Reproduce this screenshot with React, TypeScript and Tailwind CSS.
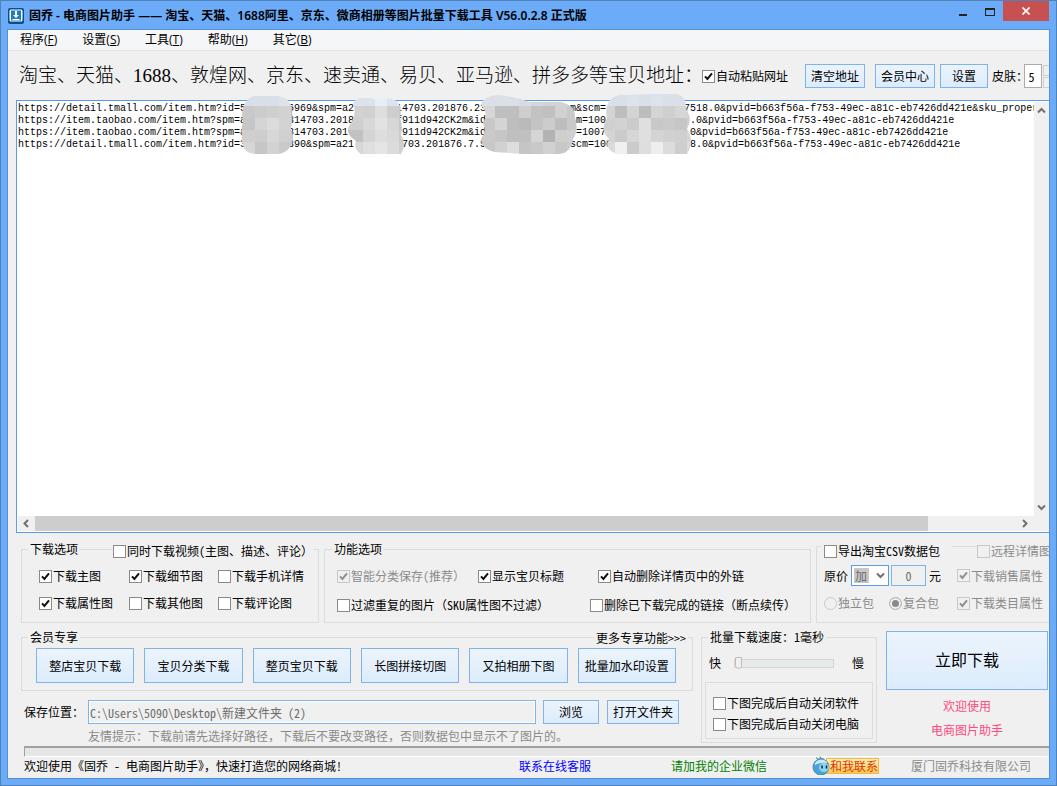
import React, { useState } from 'react';

interface CheckProps {
  label: string;
  checked?: boolean;
  disabled?: boolean;
  className?: string;
}

const Check: React.FC<CheckProps> = ({ label, checked = false, disabled = false, className = '' }) => {
  const [on, setOn] = useState(checked);
  return (
    <label
      className={`relative flex h-4 items-center gap-px whitespace-nowrap ${
        disabled ? 'text-[#8b8b8b]' : 'text-black'
      } ${className}`}
    >
      <input
        type="checkbox"
        checked={on}
        disabled={disabled}
        onChange={() => setOn(!on)}
        className="size-[13px] shrink-0 appearance-none border border-[#8a8a8a] bg-white disabled:border-[#c8c8c8] disabled:bg-[#f0f0f0]"
      />
      {on && (
        <svg className="pointer-events-none absolute left-0 size-[13px]" viewBox="0 0 13 13" fill="none">
          <path d="M3 6.4L5.4 9L10 3.4" stroke={disabled ? '#8f8f8f' : '#111'} strokeWidth="2" />
        </svg>
      )}
      {label}
    </label>
  );
};

interface BtnProps {
  children: React.ReactNode;
  className?: string;
}

const Btn: React.FC<BtnProps> = ({ children, className = '' }) => (
  <button
    type="button"
    className={`border border-[#7eb4ea] bg-linear-to-b from-[#ecf4fc] to-[#dcecfc] whitespace-nowrap ${className}`}
  >
    {children}
  </button>
);

const Radio: React.FC<{ label: string; checked?: boolean; className?: string }> = ({ label, checked, className = '' }) => (
  <label className={`relative flex h-4 items-center gap-px whitespace-nowrap text-[#8b8b8b] ${className}`}>
    <input
      type="radio"
      name="pack"
      disabled
      defaultChecked={checked}
      className="size-[13px] shrink-0 appearance-none rounded-full border border-[#c8c8c8] bg-[#f0f0f0] checked:border-[#bcbcbc] checked:bg-[#8a8a8a] checked:shadow-[inset_0_0_0_2px_#f0f0f0]"
    />
    {label}
  </label>
);

const menus = [
  { text: '程序', key: 'F' },
  { text: '设置', key: 'S' },
  { text: '工具', key: 'T' },
  { text: '帮助', key: 'H' },
  { text: '其它', key: 'B' },
];

const tail = 'pvid=b663f56a-f753-49ec-a81c-eb7426dd421e';
const gap = (n: number) => ' '.repeat(n);

const urls = [
  `https://detail.tmall.com/item.htm?id=5${gap(7)}6969&spm=a2${gap(7)}14703.201876.23${gap(14)}m&scm=${gap(13)}7518.0&${tail}&sku_proper`,
  `https://item.taobao.com/item.htm?spm=a${gap(7)}814703.2018${gap(7)}f911d942CK2m&id${gap(15)}m=100${gap(14)}.0&${tail}`,
  `https://item.taobao.com/item.htm?spm=a${gap(7)}814703.201${gap(8)}f911d942CK2m&id${gap(15)}=1007.${gap(13)}0&${tail}`,
  `https://detail.tmall.com/item.htm?id=3${gap(7)}890&spm=a21${gap(8)}703.201876.7.5${gap(14)}scm=100${gap(13)}8.0&${tail}`,
].join('\n');

// pixelated patches over the private parts of the links
const patches = [
  {
    id: 'm1',
    x: 224,
    clip: 'M238 3H262Q275 4 277 16Q278 26 276 36Q280 44 276 53Q270 61 262 61H240Q228 60 227 48Q226 36 228 28Q224 10 238 3Z',
    rows: ['#d9dfe8 #d9dfe8 #d9dfe8 #dfe3e9 #d9dfe8', '#c9c9c9 #cccccc #cfcfcf #d2d2d2 #bebebe', '#c6c6c6 #d5d5d5 #dcdcdc #d3d3d3 #cacaca', '#cfcfcf #cdcdcd #d7d7d7 #d0d0d0 #c9c9c9', '#d6d6d6 #c6c6c6 #d2d2d2 #c9c9c9 #d0d0d0'],
  },
  {
    id: 'm2',
    x: 332,
    clip: 'M346 5Q356 4 362 7Q372 4 380 7Q388 12 385 24Q388 34 386 42Q392 52 386 61H346Q338 56 341 48Q328 40 336 30Q342 20 338 11Q340 5 346 5Z',
    rows: ['#dde3ec #dde3ec #e6edf6 #dde3ec #dde3ec', '#d2d2d2 #d0d0d0 #dedede #cecece #c9c9c9', '#cfcfcf #d8d8d8 #e2e2e2 #d6d6d6 #c6c6c6', '#c2c2c2 #d4d4d4 #dddddd #d9d9d9 #cbcbcb', '#d7d7d7 #dfdfdf #e5e5e5 #dcdcdc #cfcfcf'],
  },
  {
    id: 'm3',
    x: 464,
    clip: 'M482 2Q500 3 514 9H546Q560 12 560 24Q564 38 558 46Q556 60 544 61H508L480 59Q466 56 466 46Q472 38 468 30Q474 20 466 12Q468 3 482 2Z',
    rows: ['#dbe0e7 #dbe0e7 #dbe0e7 #d8dce2 #d4d6d9 #d3d3d3 #d3d3d3 #d3d3d3', '#d6d6d6 #bfbfbf #bfbfbf #cecece #c2c2c2 #c0c0c0 #d1d1d1 #c9c9c9', '#c8c8c8 #d4d4d4 #bdbdbd #bababa #c4c4c4 #cccccc #bebebe #c9c9c9', '#cacaca #c6c6c6 #bfbfbf #c0c0c0 #d5d5d5 #b3b3b3 #cfcfcf #d0d0d0', '#c8c8c8 #d1d1d1 #dddddd #c5c5c5 #c9c9c9 #d1d1d1 #c8c8c8 #cccccc'],
  },
  {
    id: 'm4',
    x: 584,
    clip: 'M604 2L640 1H662Q672 4 671 16Q678 26 672 36Q680 48 672 61H602Q588 56 594 46Q584 36 592 26Q588 6 604 2Z',
    rows: ['#dae0e8 #dae0e8 #dde3ea #dae0e8 #dde3ea #dae0e8 #dae0e8 #dae0e8', '#d4d4d4 #bebebe #d4d4d4 #bcbcbc #d4d4d4 #cfcfcf #d6d6d6 #d2d2d2', '#d0d0d0 #d2d2d2 #cbcbcb #dfdfdf #c8c8c8 #cacaca #c6c6c6 #cfcfcf', '#d4d4d4 #cbcbcb #d7d7d7 #dfdfdf #d4d4d4 #d1d1d1 #cfcfcf #d6d6d6', '#dadada #f0f0f0 #cbcbcb #dedede #eeeeee #dcdcdc #cecece #dcdcdc'],
  },
];

const Mosaic: React.FC = () => (
  <svg className="pointer-events-none absolute -top-2 -left-[2px] h-[62px] w-[700px]" viewBox="0 0 700 62">
    {patches.map((p) => (
      <g key={p.id} clipPath={`url(#${p.id})`}>
        <clipPath id={p.id}>
          <path d={p.clip} />
        </clipPath>
        {p.rows.map((row, r) =>
          row.split(' ').map((c, i, all) => {
            const left = i === 0 ? 12 : 0;
            const right = i === all.length - 1 ? 12 : 0;
            const up = r === 0 ? 2 : 0;
            return (
              <rect
                key={`${r}-${i}`}
                x={p.x + 4 + i * 12 - left}
                y={r * 12 + 1 - up}
                width={12 + left + right}
                height={12 + up}
                fill={c}
                shapeRendering="crispEdges"
              />
            );
          })
        )}
      </g>
    ))}
  </svg>
);

const Arrow: React.FC<{ d: string; className?: string }> = ({ d, className = '' }) => (
  <svg className={`size-[9px] shrink-0 ${className}`} viewBox="0 0 9 9" fill="none">
    <path d={d} stroke="#707070" strokeWidth="2" />
  </svg>
);

const TitleBar: React.FC = () => (
  <header className="flex h-[29px] items-start justify-between">
    <div className="flex h-[29px] items-center gap-[5px] font-['Noto_Sans','Noto_Sans_CJK_SC',sans-serif] font-semibold whitespace-nowrap">
      <svg className="size-4" viewBox="0 0 16 16">
        <rect width="16" height="16" rx="2" fill="#0b4f8c" />
        <rect x="1.5" y="1.5" width="13" height="12" rx="1.5" fill="#fff" />
        <rect x="3" y="2.5" width="10" height="10" fill="#1b7cc4" />
        <path d="M7 3h2v4h2L8 10 5 7h2z" fill="#fff" />
        <path d="M4.500 11.500h7" stroke="#fff" strokeWidth="1.200" />
      </svg>
      <h1>固乔 - 电商图片助手 —— 淘宝、天猫、1688阿里、京东、微商相册等图片批量下载工具 V56.0.2.8 正式版</h1>
    </div>
    <div className="flex">
      <button type="button" aria-label="最小化" className="flex h-[21px] w-[27px] items-center justify-center">
        <svg className="size-[10px]" viewBox="0 0 10 10">
          <path d="M1 7h8v2H1z" fill="#222" />
        </svg>
      </button>
      <button type="button" aria-label="最大化" className="flex h-[21px] w-[27px] items-center justify-center">
        <svg className="h-2 w-[10px]" viewBox="0 0 10 8">
          <path d="M0 0h10v8H0zM1 2v5h8V2z" fill="#222" fillRule="evenodd" />
        </svg>
      </button>
      <button type="button" aria-label="关闭" className="flex h-5 w-[46px] items-center justify-center bg-[#c75050]">
        <svg className="size-2" viewBox="0 0 8 8">
          <path d="M.5 .5l7 7M7.500 .5l-7 7" stroke="#fff" strokeWidth="1.700" />
        </svg>
      </button>
    </div>
  </header>
);

const LinkBox: React.FC = () => (
  <div className="relative ml-2 flex min-h-[433px] flex-1 flex-col border-y border-l border-[#569de5] bg-white p-px pr-0">
    <div className="flex flex-1">
      <textarea
        aria-label="宝贝地址"
        wrap="off"
        defaultValue={urls}
        className="min-w-0 flex-1 resize-none overflow-hidden pt-px font-['Liberation_Mono',monospace] text-[10px] leading-3 whitespace-pre text-black outline-none"
      />
      <div className="flex w-[15px] flex-col items-center justify-between bg-[#f0f0f0] py-1">
        <Arrow d="M1 6.500L4.500 3L8 6.500" />
        <Arrow d="M1 2.500L4.500 6L8 2.500" />
      </div>
    </div>
    <div className="flex h-[15px] items-center bg-[#f0f0f0] pr-5">
      <Arrow d="M6 1L2.500 4.500L6 8" className="mx-1" />
      <div className="flex h-full flex-1">
        <div className="flex-29 bg-[#cdcdcd]" />
        <div className="flex-3" />
      </div>
      <Arrow d="M3 1L6.500 4.500L3 8" />
    </div>
    <Mosaic />
  </div>
);

const group = 'border border-[#dcdcdc]';

const DownloadOptions: React.FC = () => (
  <fieldset className={`relative h-[82px] w-[298px] ${group}`}>
    <legend className="ml-[6px] h-4 px-[2px] leading-4">下载选项</legend>
    <div className="absolute -top-[14px] right-1 bg-[#f0f0f0] px-px">
      <Check label="同时下载视频(主图、描述、评论）" />
    </div>
    <div className="grid grid-cols-[90px_89px_auto] gap-y-[11px] pt-[11px] pl-[17px]">
      <Check label="下载主图" checked />
      <Check label="下载细节图" checked />
      <Check label="下载手机详情" />
      <Check label="下载属性图" checked />
      <Check label="下载其他图" />
      <Check label="下载评论图" />
    </div>
  </fieldset>
);

const FeatureOptions: React.FC = () => (
  <fieldset className={`h-[82px] w-[487px] ${group}`}>
    <legend className="ml-[7px] h-4 px-[2px] leading-4">功能选项</legend>
    <div className="flex pt-[11px] pl-3">
      <Check label="智能分类保存(推荐）" checked disabled className="w-[141px]" />
      <Check label="显示宝贝标题" checked className="w-[120px]" />
      <Check label="自动删除详情页中的外链" checked />
    </div>
    <div className="flex pt-[13px] pl-3">
      <Check label="过滤重复的图片（SKU属性图不过滤）" className="w-[253px]" />
      <Check label="删除已下载完成的链接（断点续传）" />
    </div>
  </fieldset>
);

const ExportOptions: React.FC = () => (
  <fieldset className="relative mt-[5px] h-[77px] min-w-0 flex-1 border border-r-0 border-[#dcdcdc]">
    <div className="absolute -top-1 left-1 flex w-[229px] justify-between overflow-hidden">
      <div className="bg-[#f0f0f0] pr-3 pl-[3px]">
        <Check label="导出淘宝CSV数据包" />
      </div>
      <div className="w-[73px] shrink-0 bg-[#f0f0f0]">
        <Check label="远程详情图" disabled />
      </div>
    </div>
    <div className="flex items-center pt-[18px] pl-[7px]">
      <label htmlFor="priceOp" className="w-[27px] whitespace-nowrap">原价</label>
      <div className="relative">
        <select
          id="priceOp"
          defaultValue="加"
          className="block h-[21px] w-[38px] appearance-none border border-[#569de5] bg-white bg-linear-to-r from-[#c8c8c8] to-[#c8c8c8] bg-size-[15px_15px] bg-position-[2px_2px] bg-no-repeat pl-[3px] text-[#6d6d6d]"
        >
          <option>加</option>
          <option>减</option>
        </select>
        <Arrow d="M1 2.500L4.500 6L8 2.500" className="pointer-events-none absolute top-[6px] right-1" />
      </div>
      <input
        aria-label="金额"
        disabled
        defaultValue="0"
        className="ml-[2px] h-[21px] w-[35px] border border-[#7eb4ea] bg-[#f0f0f0] text-center text-[#6d6d6d]"
      />
      <span className="w-[31px] pl-[3px]">元</span>
      <Check label="下载销售属性" checked disabled />
    </div>
    <div className="flex pt-[9px] pl-[7px]">
      <Radio label="独立包" className="w-[65px]" />
      <Radio label="复合包" checked className="w-[68px]" />
      <Check label="下载类目属性" checked disabled />
    </div>
  </fieldset>
);

const memberActions = ['整店宝贝下载', '宝贝分类下载', '整页宝贝下载', '长图拼接切图', '又拍相册下图', '批量加水印设置'];

const MemberPanel: React.FC = () => (
  <fieldset className={`relative h-[62px] min-w-0 ${group}`}>
    <legend className="ml-[6px] h-4 px-[2px] leading-4">会员专享</legend>
    <a href="#more" className="absolute -top-[15px] right-1 bg-[#f0f0f0] px-[2px] leading-4">
      更多专享功能&gt;&gt;&gt;
    </a>
    <div className="flex gap-[10px] pt-[3px] pr-4 pl-[14px]">
      {memberActions.map((t) => (
        <Btn key={t} className="h-[35px] min-w-0 flex-1">
          {t}
        </Btn>
      ))}
    </div>
  </fieldset>
);

const SpeedPanel: React.FC = () => (
  <fieldset className={`h-[114px] w-[176px] px-[3px] ${group}`}>
    <legend className="ml-[3px] h-4 px-[2px] leading-4">批量下载速度：1毫秒</legend>
    <label className="flex h-9 items-center pl-1">
      快
      <input
        type="range"
        aria-label="下载速度"
        defaultValue={0}
        className="mr-[18px] ml-[13px] h-[9px] w-[100px] appearance-none border border-[#d6d6d6] bg-[#e7eaea] [&::-webkit-slider-thumb]:h-3 [&::-webkit-slider-thumb]:w-[7px] [&::-webkit-slider-thumb]:appearance-none [&::-webkit-slider-thumb]:rounded-b-full [&::-webkit-slider-thumb]:border [&::-webkit-slider-thumb]:border-[#bdbdbd] [&::-webkit-slider-thumb]:bg-[#f0f0f0]"
      />
      慢
    </label>
    <div className={`mt-px flex h-[57px] flex-col gap-[5px] pt-3 pl-[7px] ${group}`}>
      <Check label="下图完成后自动关闭软件" />
      <Check label="下图完成后自动关闭电脑" />
    </div>
  </fieldset>
);

const StatusBar: React.FC = () => (
  <footer className="grid h-[21px] grid-cols-[495fr_152fr_141fr_99fr_138fr] items-center pb-1 pl-4 whitespace-nowrap">
    <span>欢迎使用《固乔 - 电商图片助手》，快速打造您的网络商城!</span>
    <a href="#service" className="text-[#0000ff]">联系在线客服</a>
    <a href="#wechat" className="text-[#008000]">请加我的企业微信</a>
    <a href="#contact" className="relative flex items-center pl-[14px]">
      <svg className="absolute left-0 h-[19px] w-[18px]" viewBox="0 0 18 19">
        <path d="M9 5Q4 4 4 1q2 2 4 2Q7 1 8 0q1 3 4 2-1 1-1 3z" fill="#4e86a6" />
        <circle cx="9" cy="11" r="8" fill="#4aa3d8" stroke="#4f88a8" />
        <path d="M2.500 9q1-5 7-5.500 4 0 6 3.500-7-1-13 2z" fill="#c9ecfb" />
        <ellipse cx="12" cy="11.500" rx="5" ry="4.500" fill="#8fd3f2" />
        <path d="M10 9.500v3M14.500 9.500v3" stroke="#123" strokeWidth="1.500" />
      </svg>
      <span className="h-4 border border-[#f5b54a] bg-linear-to-b from-[#fff3b0] to-[#ffc94d] pl-[3px] leading-[14px] text-[#d8340a]">
        和我联系
      </span>
    </a>
    <span className="text-[#8b8b8b]">厦门固乔科技有限公司</span>
  </footer>
);

export default function App() {
  return (
    <div className="flex min-h-screen flex-col border border-[#4f82b8] bg-[#6babf7] px-[7px] pb-[7px] font-['Noto_Sans_Mono_CJK_SC','Noto_Sans_CJK_SC','Liberation_Sans',sans-serif] text-[12px] leading-4 text-black">
      <TitleBar />
      <main className="flex flex-1 flex-col overflow-hidden bg-[#f0f0f0] shadow-[0_0_0_1px_#5590d2]">
        <nav className="flex h-[21px] items-center gap-[25px] border-b border-[#e3e6e8] bg-[#f5f6f7] pl-3 font-['Open_Sans','Noto_Sans_CJK_SC',sans-serif]">
          {menus.map((m) => (
            <button key={m.key} type="button" className="whitespace-nowrap">
              {m.text}(<u>{m.key}</u>)
            </button>
          ))}
        </nav>

        <div className="flex h-[49px] items-center pt-px pl-[11px] whitespace-nowrap">
          <h2 className="w-[683px] shrink-0 font-['Liberation_Serif','Noto_Sans_CJK_SC',serif] text-[19px] leading-6 font-light">
            淘宝、天猫、1688、敦煌网、京东、速卖通、易贝、亚马逊、拼多多等宝贝地址：
          </h2>
          <Check label="自动粘贴网址" checked className="mr-[17px]" />
          <Btn className="mr-[10px] h-6 w-[60px] shrink-0">清空地址</Btn>
          <Btn className="mr-[5px] h-6 w-[60px] shrink-0">会员中心</Btn>
          <Btn className="mr-1 h-6 w-12 shrink-0">设置</Btn>
          <label htmlFor="skin" className="w-8 shrink-0">皮肤：</label>
          <input id="skin" defaultValue="5" className="h-6 w-[18px] shrink-0 border border-[#ababab] bg-white pr-[3px] text-center" />
          <div className="ml-px flex shrink-0 flex-col gap-px">
            <button type="button" aria-label="增加" className="h-[11px] w-4 border border-[#cfcfcf] bg-[#f0f0f0]" />
            <button type="button" aria-label="减少" className="h-[11px] w-4 border border-[#cfcfcf] bg-[#f0f0f0]" />
          </div>
        </div>

        <LinkBox />

        <div className="mt-2 flex gap-[5px] pl-[13px]">
          <DownloadOptions />
          <FeatureOptions />
          <ExportOptions />
        </div>

        <div className="mt-[6px] flex pl-[13px]">
          <div className="min-w-0 flex-1">
            <MemberPanel />
            <div className="mt-[9px] flex items-center pr-[14px] pl-[3px]">
              <label htmlFor="path" className="w-16 whitespace-nowrap">保存位置：</label>
              <input
                id="path"
                readOnly
                defaultValue="C:\Users\5090\Desktop\新建文件夹 (2)"
                className="h-6 min-w-0 flex-1 border border-[#7eb4ea] bg-[#f0f0f0] pl-px text-[#6d6d6d] shadow-[inset_0_0_0_1px_#fff]"
              />
              <Btn className="ml-[7px] h-6 w-14">浏览</Btn>
              <Btn className="ml-2 h-6 w-[72px]">打开文件夹</Btn>
            </div>
            <p className="mt-1 pl-[67px] whitespace-nowrap text-[#8b8b8b]">
              友情提示：下载前请先选择好路径，下载后不要改变路径，否则数据包中显示不了图片的。
            </p>
          </div>
          <div className="ml-2">
            <SpeedPanel />
          </div>
          <div className="mt-[2px] mr-px ml-[9px] flex w-[162px] flex-col text-center text-[#ff4a7f]">
            <Btn className="h-[59px] pb-1 text-[16px] text-black">立即下载</Btn>
            <p className="mt-2">欢迎使用</p>
            <p className="mt-2">电商图片助手</p>
          </div>
        </div>

        <div className="mt-[2px] ml-4 h-[11px] border-t-2 border-b border-l border-t-[#a0a0a0] border-b-white border-l-[#a0a0a0] bg-[#e6e6e6]" />
        <StatusBar />
      </main>
    </div>
  );
}
